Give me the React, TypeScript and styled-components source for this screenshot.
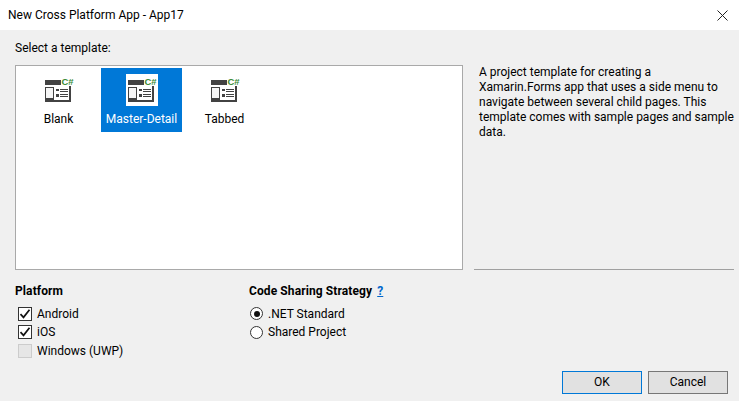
import React from 'react';
import styled, { createGlobalStyle } from 'styled-components';

const GlobalStyle = createGlobalStyle`
  html, body {
    margin: 0;
    padding: 0;
    width: 739px;
    height: 401px;
    overflow: hidden;
    background: #f0f0f0;
  }
  * {
    box-sizing: border-box;
  }
`;

const Dialog = styled.div`
  width: 739px;
  height: 401px;
  display: flex;
  flex-direction: column;
  background: #f0f0f0;
  color: #000;
  font-family: 'Roboto', 'Noto Sans', sans-serif;
  font-size: 12px;
`;

const TitleBar = styled.div`
  height: 30px;
  flex: none;
  display: flex;
  align-items: center;
  justify-content: space-between;
  padding: 0 11px 0 8px;
  background: #fff;
`;

const Title = styled.span`
  line-height: 30px;
`;

const CloseIcon = styled.svg`
  width: 11px;
  height: 11px;
  display: block;
`;

const Body = styled.div`
  flex: 1;
  display: flex;
  flex-direction: column;
  padding: 11px 11px 7px 15px;
`;

const SelectLabel = styled.div`
  height: 15px;
  line-height: 15px;
  margin-bottom: 9px;
`;

const TopRow = styled.div`
  display: flex;
  gap: 11px;
  height: 205px;
`;

const TemplateList = styled.div`
  width: 448px;
  height: 205px;
  flex: none;
  display: flex;
  align-items: flex-start;
  gap: 2px;
  padding: 2px;
  background: #fff;
  border: 1px solid #a9a9a9;
`;

const TemplateItem = styled.div<{ $selected?: boolean }>`
  width: 81px;
  height: 64px;
  display: flex;
  flex-direction: column;
  align-items: center;
  padding-top: 6px;
  background: ${(p) => (p.$selected ? '#0078d7' : 'transparent')};
  color: ${(p) => (p.$selected ? '#fff' : '#000')};
`;

const IconSvg = styled.svg<{ $selected?: boolean }>`
  width: 32px;
  height: 32px;
  display: block;
  background: ${(p) => (p.$selected ? '#fff' : 'transparent')};
`;

const ItemLabel = styled.span`
  margin-top: 5px;
  line-height: 16px;
`;

const DescriptionColumn = styled.div`
  flex: 1;
  display: flex;
  flex-direction: column;
  justify-content: space-between;
  margin-right: -6px;
`;

const Description = styled.p`
  margin: 0;
  padding: 0 0 0 5px;
  line-height: 15px;
  width: 260px;
`;

const Separator = styled.div`
  height: 1px;
  background: #a0a0a0;
`;

const OptionsRow = styled.div`
  display: flex;
  margin-top: 13px;
`;

const OptionGroup = styled.div<{ $width: number }>`
  width: ${(p) => p.$width}px;
  display: flex;
  flex-direction: column;
`;

const GroupHeading = styled.div`
  height: 16px;
  line-height: 16px;
  font-weight: 700;
  letter-spacing: 0.1px;
  margin-bottom: 5px;
`;

const HelpLink = styled.span`
  margin-left: 2px;
  color: #0066cc;
  text-decoration: underline;
`;

const OptionRow = styled.div<{ $offset: number; $rowHeight: number }>`
  height: ${(p) => p.$rowHeight}px;
  display: flex;
  align-items: center;
  gap: 5px;
  padding-left: ${(p) => p.$offset}px;
  line-height: 16px;
`;

const CheckBox = styled.span<{ $disabled?: boolean }>`
  width: 14px;
  height: 14px;
  flex: none;
  display: flex;
  align-items: center;
  justify-content: center;
  border: 1px solid ${(p) => (p.$disabled ? '#cccccc' : '#333333')};
  background: ${(p) => (p.$disabled ? '#e6e6e6' : '#fff')};
`;

const Radio = styled.span`
  width: 13px;
  height: 13px;
  flex: none;
  display: flex;
  align-items: center;
  justify-content: center;
  border: 1px solid #333333;
  border-radius: 50%;
  background: #fff;
`;

const RadioDot = styled.span`
  width: 6px;
  height: 6px;
  border-radius: 50%;
  background: #111;
`;

const Footer = styled.div`
  margin-top: auto;
  display: flex;
  justify-content: flex-end;
  gap: 6px;
`;

const DialogButton = styled.button<{ $primary?: boolean }>`
  width: 80px;
  height: 23px;
  padding: 0;
  font: inherit;
  line-height: 19px;
  color: #000;
  background: #e1e1e1;
  border: 1px solid ${(p) => (p.$primary ? '#0078d7' : '#777777')};
`;

const TemplateIcon = ({ selected }: { selected?: boolean }) => (
  <IconSvg $selected={selected} viewBox="0 0 32 32">
    <rect x="2" y="6" width="16" height="5" fill="#424242" />
    <rect x="26" y="12" width="2" height="16" fill="#424242" />
    <rect x="11" y="26" width="17" height="2" fill="#424242" />
    <rect x="2.5" y="13.5" width="8" height="14" fill="#f6f6f6" stroke="#424242" />
    <rect x="3" y="24" width="7" height="3.5" fill="#424242" />
    <rect x="13" y="15" width="3" height="2" fill="#424242" />
    <rect x="13" y="20" width="3" height="3" fill="#424242" />
    <rect x="17" y="15" width="8" height="1" fill="#424242" />
    <rect x="17" y="17" width="8" height="1" fill="#424242" />
    <rect x="17" y="20" width="8" height="1" fill="#424242" />
    <rect x="17" y="22" width="8" height="1" fill="#424242" />
    <text
      x="18.5"
      y="11"
      fill="#388a34"
      fontFamily="'Liberation Sans', sans-serif"
      fontSize="9.5"
      fontWeight="700"
    >
      C#
    </text>
  </IconSvg>
);

const CheckMark = () => (
  <svg width="12" height="12" viewBox="0 0 12 12">
    <path d="M1.5 6.2 L4.5 9.4 L10.5 1.8" fill="none" stroke="#111" strokeWidth="1.7" />
  </svg>
);

const templates = ['Blank', 'Master-Detail', 'Tabbed'];

export default function App() {
  return (
    <>
      <GlobalStyle />
      <Dialog>
        <TitleBar>
          <Title>New Cross Platform App - App17</Title>
          <CloseIcon viewBox="0 0 11 11">
            <path d="M0.5 0.5 L10.5 10.5 M10.5 0.5 L0.5 10.5" stroke="#222" strokeWidth="1" />
          </CloseIcon>
        </TitleBar>
        <Body>
          <SelectLabel>Select a template:</SelectLabel>
          <TopRow>
            <TemplateList>
              {templates.map((name) => (
                <TemplateItem key={name} $selected={name === 'Master-Detail'}>
                  <TemplateIcon selected={name === 'Master-Detail'} />
                  <ItemLabel>{name}</ItemLabel>
                </TemplateItem>
              ))}
            </TemplateList>
            <DescriptionColumn>
              <Description>
                A project template for creating a Xamarin.Forms app that uses a side menu to
                navigate between several child pages. This template comes with sample pages and
                sample data.
              </Description>
              <Separator />
            </DescriptionColumn>
          </TopRow>
          <OptionsRow>
            <OptionGroup $width={234}>
              <GroupHeading>Platform</GroupHeading>
              <OptionRow $offset={3} $rowHeight={19}>
                <CheckBox>
                  <CheckMark />
                </CheckBox>
                Android
              </OptionRow>
              <OptionRow $offset={3} $rowHeight={18}>
                <CheckBox>
                  <CheckMark />
                </CheckBox>
                iOS
              </OptionRow>
              <OptionRow $offset={3} $rowHeight={19}>
                <CheckBox $disabled />
                Windows (UWP)
              </OptionRow>
            </OptionGroup>
            <OptionGroup $width={200}>
              <GroupHeading>
                Code Sharing Strategy <HelpLink>?</HelpLink>
              </GroupHeading>
              <OptionRow $offset={1} $rowHeight={19}>
                <Radio>
                  <RadioDot />
                </Radio>
                .NET Standard
              </OptionRow>
              <OptionRow $offset={1} $rowHeight={18}>
                <Radio />
                Shared Project
              </OptionRow>
            </OptionGroup>
          </OptionsRow>
          <Footer>
            <DialogButton $primary>OK</DialogButton>
            <DialogButton>Cancel</DialogButton>
          </Footer>
        </Body>
      </Dialog>
    </>
  );
}
